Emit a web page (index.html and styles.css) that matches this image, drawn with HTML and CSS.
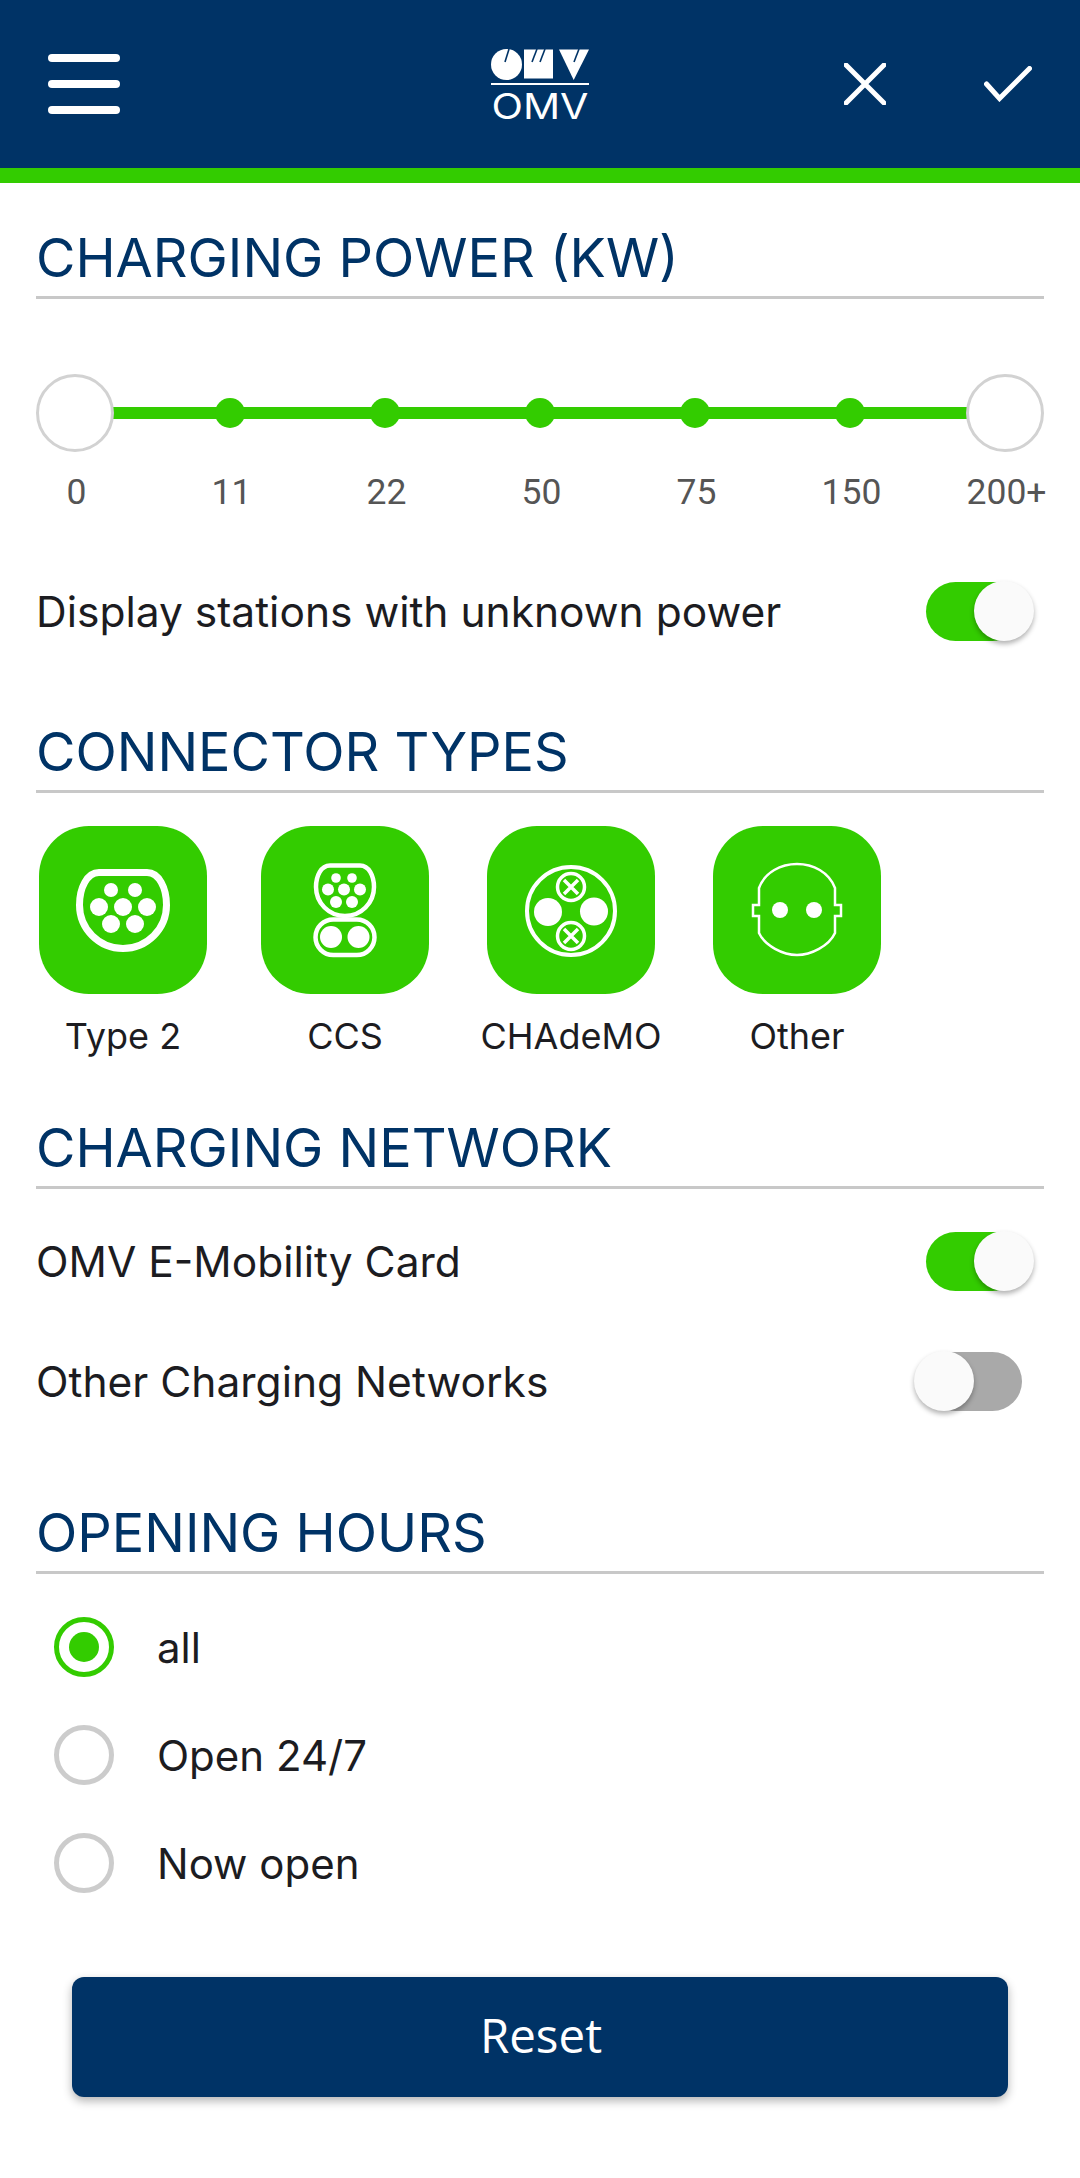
FILE: index.html
```html
<!DOCTYPE html>
<html lang="en">
<head>
<meta charset="utf-8">
<title>OMV charging filter</title>
<link rel="stylesheet" href="styles.css">
</head>
<body>
<header class="topbar">
  <svg class="menu" width="72" height="60" viewBox="0 0 72 60"><rect x="0" y="0" width="72" height="8" rx="4"/><rect x="0" y="26" width="72" height="8" rx="4"/><rect x="0" y="52" width="72" height="8" rx="4"/></svg>
  <svg class="logo" width="98" height="84" viewBox="0 0 98 84">
    <circle cx="15.500" cy="15.500" r="15.500" fill="#fff"/>
    <rect x="33" y="0.500" width="29" height="29" fill="#fff"/>
    <polygon points="68,0.500 98,0.500 82.700,31" fill="#fff"/>
    <g stroke="#003366" stroke-width="1.600" fill="none"><path d="M18 0 14 13"/><path d="M46 0 41 13"/><path d="M54 0 49 13"/><path d="M88 0 83 13"/></g>
    <rect x="0" y="34" width="98" height="2" fill="#fff"/>
    <text class="logo-text" x="0.500" y="69.500" textLength="97" lengthAdjust="spacingAndGlyphs">OMV</text>
  </svg>
  <div class="actions">
    <svg width="42" height="42" viewBox="0 0 42 42"><path d="M2 2 40 40M40 2 2 40" stroke="#fff" stroke-width="5" stroke-linecap="round" fill="none"/></svg>
    <svg width="48" height="36" viewBox="0 0 48 36"><path d="M2.500 18 15.500 32.500 45.500 2.500" stroke="#fff" stroke-width="5" stroke-linecap="round" stroke-linejoin="miter" fill="none"/></svg>
  </div>
</header>

<main class="page">
  <h2 class="title title-power">CHARGING POWER (KW)</h2>
  <div class="slider">
    <span class="handle"></span><span class="stop"><i></i></span><span class="stop"><i></i></span><span class="stop"><i></i></span><span class="stop"><i></i></span><span class="stop"><i></i></span><span class="handle"></span>
  </div>
  <div class="scale">
    <span>0</span><span>11</span><span>22</span><span>50</span><span>75</span><span>150</span><span>200+</span>
  </div>
  <div class="row row-unknown"><span>Display stations with unknown power</span><span class="switch on"></span></div>

  <h2 class="title title-connector">CONNECTOR TYPES</h2>
  <div class="connectors">
    <div class="connector">
      <svg class="tile" width="168" height="168" viewBox="0 0 168 168">
        <path d="M60 46.500H108C120 46.500 127.500 62 127.500 79A43.500 43.500 0 0 1 40.500 79C40.500 62 48 46.500 60 46.500Z" fill="none" stroke="#fff" stroke-width="7"/>
        <g fill="#fff"><circle cx="72" cy="64" r="7"/><circle cx="96" cy="64" r="7"/><circle cx="60" cy="81" r="9"/><circle cx="84" cy="81" r="9"/><circle cx="108" cy="81" r="9"/><circle cx="72" cy="98" r="9"/><circle cx="96" cy="98" r="9"/></g>
      </svg>
      <span>Type 2</span>
    </div>
    <div class="connector">
      <svg class="tile" width="168" height="168" viewBox="0 0 168 168">
        <path d="M69 39.500H99C108 39.500 113 50 113 61A29 29 0 0 1 55 61C55 50 60 39.500 69 39.500Z" fill="none" stroke="#fff" stroke-width="4.500"/>
        <rect x="54.500" y="93.500" width="59" height="35.500" rx="17.700" fill="none" stroke="#fff" stroke-width="4.500"/>
        <g fill="#fff"><circle cx="75" cy="52" r="4.800"/><circle cx="91" cy="52" r="4.800"/><circle cx="67" cy="63.500" r="6"/><circle cx="83" cy="63.500" r="6"/><circle cx="99" cy="63.500" r="6"/><circle cx="75" cy="76" r="6"/><circle cx="91" cy="76" r="6"/><circle cx="70" cy="111" r="11"/><circle cx="97.500" cy="111" r="11"/></g>
      </svg>
      <span>CCS</span>
    </div>
    <div class="connector">
      <svg class="tile" width="168" height="168" viewBox="0 0 168 168">
        <circle cx="84" cy="85" r="44" fill="none" stroke="#fff" stroke-width="4"/>
        <g fill="#fff"><circle cx="61" cy="86" r="14"/><circle cx="107" cy="85.500" r="14"/></g>
        <g fill="none" stroke="#fff"><circle cx="84" cy="61" r="13.500" stroke-width="3.500"/><circle cx="84" cy="110" r="13.500" stroke-width="3.500"/><path d="M77 54 91 68M91 54 77 68M77 103 91 117M91 103 77 117" stroke-width="3.500"/></g>
      </svg>
      <span>CHAdeMO</span>
    </div>
    <div class="connector">
      <svg class="tile" width="168" height="168" viewBox="0 0 168 168">
        <path d="M46 62C52 46 68 38 84 38C100 38 116 46 122 62V79H128V90H122V107C116 120 98 129 84 129C70 129 52 120 46 107V90H40V79H46Z" fill="none" stroke="#fff" stroke-width="2.500"/>
        <g fill="#fff"><circle cx="67" cy="84" r="8"/><circle cx="101" cy="84" r="8"/></g>
      </svg>
      <span>Other</span>
    </div>
  </div>

  <h2 class="title title-network">CHARGING NETWORK</h2>
  <div class="row row-card"><span>OMV E-Mobility Card</span><span class="switch on"></span></div>
  <div class="row row-other"><span>Other Charging Networks</span><span class="switch"></span></div>

  <h2 class="title title-hours">OPENING HOURS</h2>
  <div class="options">
    <div class="option"><span class="radio selected"></span><span>all</span></div>
    <div class="option"><span class="radio"></span><span>Open 24/7</span></div>
    <div class="option"><span class="radio"></span><span>Now open</span></div>
  </div>

  <button class="reset" type="button">Reset</button>
</main>
</body>
</html>
```
FILE: styles.css
```css
* { box-sizing: border-box; }
html, body { margin: 0; padding: 0; background: #fff; }
body { font-family: "Inter", "Noto Sans", sans-serif; color: #1c1c21; width: 1080px; height: 2178px; overflow: hidden; }

.topbar {
  height: 183px;
  background: #003366;
  border-bottom: 15px solid #33cc00;
  display: grid;
  grid-template-columns: 1fr auto 1fr;
  align-items: center;
}
.menu { margin-left: 48px; fill: #fff; }
.logo { margin-top: 14px; }
.logo-text { font-family: "Inter", sans-serif; font-size: 35px; fill: #fff; }
.actions { display: flex; justify-content: flex-end; align-items: center; gap: 98px; padding-right: 48px; }

.page { padding: 0 36px; }
.title {
  margin: 0;
  height: 71px;
  line-height: 60px;
  font-size: 54px;
  font-weight: 400;
  color: #003366;
  border-bottom: 3px solid #c8c8c8;
}
.title-power { margin-top: 45px; }
.title-connector { margin-top: 81px; }
.title-network { margin-top: 62px; }
.title-hours { margin-top: 92px; }

.slider {
  position: relative;
  margin-top: 75px;
  height: 78px;
  display: flex;
  justify-content: space-between;
  align-items: center;
}
.slider::before {
  content: "";
  position: absolute;
  left: 39px; right: 39px; top: 33px;
  height: 12px;
  background: #33cc00;
}
.handle {
  position: relative;
  width: 78px; height: 78px;
  border-radius: 50%;
  background: #fff;
  border: 3px solid #d2d2d2;
}
.stop { position: relative; width: 78px; display: flex; justify-content: center; }
.stop i { display: block; width: 30px; height: 30px; border-radius: 50%; background: #33cc00; }

.scale { margin-top: 20px; display: flex; justify-content: space-between; }
.scale span {
  width: 78px;
  padding-left: 3px;
  display: flex; justify-content: center;
  white-space: nowrap;
  font-family: "Roboto", sans-serif;
  font-size: 35.500px;
  line-height: 40px;
  color: #555;
}

.row {
  height: 60px;
  display: flex;
  align-items: center;
  justify-content: space-between;
  padding-right: 22px;
  font-size: 42.500px;
}
.row-unknown { margin-top: 69px; }
.row-card { margin-top: 42px; }
.row-other { margin-top: 60px; }

.switch {
  position: relative;
  width: 96px; height: 59px;
  border-radius: 30px;
  background: #a9a9a9;
}
.switch::after {
  content: "";
  position: absolute;
  top: -1px;
  left: -12px;
  width: 60px; height: 60px;
  border-radius: 50%;
  background: #fafafa;
  box-shadow: 0 3px 5px rgba(0,0,0,.3);
}
.switch.on { background: #33cc00; }
.switch.on::after { left: 48px; }

.connectors {
  margin-top: 33px;
  padding-left: 3px;
  display: grid;
  grid-template-columns: 222px 226px 226px 168px;
}
.connector { width: 168px; display: flex; flex-direction: column; align-items: center; }
.connector span { margin-top: 22px; font-size: 36px; line-height: 40px; white-space: nowrap; }
.tile { display: block; background: #33cc00; border-radius: 50px; flex: none; }

.options { margin-top: 43px; display: flex; flex-direction: column; gap: 48px; padding-left: 18px; }
.option { height: 60px; display: flex; align-items: center; gap: 43px; font-size: 42px; }
.radio {
  width: 60px; height: 60px;
  border-radius: 50%;
  border: 5px solid #cccccc;
  background: #fff;
  display: flex; align-items: center; justify-content: center;
  flex: none;
}
.radio.selected { border-color: #33cc00; }
.radio.selected::after { content: ""; width: 30px; height: 30px; border-radius: 50%; background: #33cc00; }

.reset {
  display: block;
  margin: 84px 36px 0;
  padding: 0 0 6px 2px;
  width: 936px; height: 120px;
  border: 0;
  border-radius: 12px;
  background: #003366;
  color: #fff;
  font-family: "Open Sans", sans-serif;
  font-size: 47.500px;
  box-shadow: 0 4px 10px rgba(0,0,0,.3);
}
```
